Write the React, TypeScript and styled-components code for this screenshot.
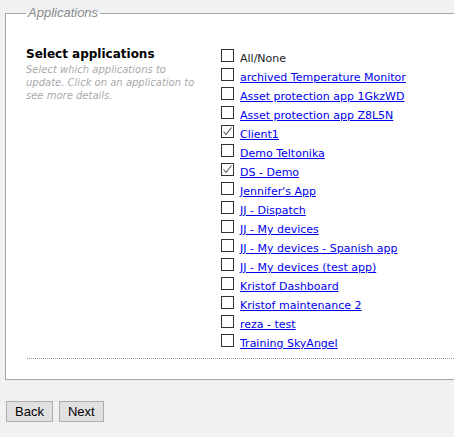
import styled, { createGlobalStyle } from 'styled-components';

const apps: { name: string; checked?: boolean }[] = [
  { name: 'archived Temperature Monitor' },
  { name: 'Asset protection app 1GkzWD' },
  { name: 'Asset protection app Z8L5N' },
  { name: 'Client1', checked: true },
  { name: 'Demo Teltonika' },
  { name: 'DS - Demo', checked: true },
  { name: "Jennifer's App" },
  { name: 'JJ - Dispatch' },
  { name: 'JJ - My devices' },
  { name: 'JJ - My devices - Spanish app' },
  { name: 'JJ - My devices (test app)' },
  { name: 'Kristof Dashboard' },
  { name: 'Kristof maintenance 2' },
  { name: 'reza - test' },
  { name: 'Training SkyAngel' },
];

const GlobalStyle = createGlobalStyle`
  html, body {
    margin: 0;
    padding: 0;
    background: #f0f1f3;
    overflow: hidden;
  }
  body {
    font-family: "DejaVu Sans", Verdana, sans-serif;
  }
`;

const Page = styled.div`
  padding-top: 5px;
`;

const Fieldset = styled.fieldset`
  margin: 0 0 0 5px;
  padding: 25px 0 20px 20px;
  border: 1px solid #a5a5a5;
  border-right: none;
  background: #fff;
  min-width: 0;
`;

const Legend = styled.legend`
  padding: 0 2px;
  font-family: "Liberation Sans", Arial, sans-serif;
  font-style: italic;
  font-size: 13px;
  line-height: 16px;
  color: #8a8a8a;
`;

const Columns = styled.div`
  display: flex;
  align-items: flex-start;
`;

const Intro = styled.div`
  width: 195px;
  padding-right: 20px;
  box-sizing: border-box;
`;

const Heading = styled.div`
  font-weight: bold;
  font-size: 12px;
  line-height: 16px;
  color: #000;
`;

const Hint = styled.div`
  margin-top: 1px;
  font-style: italic;
  font-size: 10px;
  line-height: 13px;
  color: #aaa;
`;

const List = styled.div`
  margin-top: 3px;
  display: flex;
  flex-direction: column;
`;

const Row = styled.label`
  display: flex;
  align-items: flex-start;
  gap: 6px;
  height: 19px;
  font-size: 11px;
  line-height: 19px;
  white-space: nowrap;
`;

const Box = styled.span`
  width: 13px;
  height: 13px;
  flex: none;
  box-sizing: border-box;
  border: 1px solid #333;
  background: #fff;
  display: flex;
  align-items: center;
  justify-content: center;
`;

const Plain = styled.span`
  color: #222;
`;

const AppLink = styled.a`
  color: #0000ee;
  text-decoration: underline;
  cursor: pointer;
`;

const Divider = styled.div`
  margin-top: 5px;
  margin-left: 1px;
  border-top: 1px dotted #999;
`;

const Buttons = styled.div`
  display: flex;
  gap: 6px;
  margin: 21px 0 0 6px;
`;

const Button = styled.button`
  height: 21px;
  padding: 0 8px;
  font-family: "Liberation Sans", Arial, sans-serif;
  font-size: 13px;
  color: #000;
  background: #e1e1e1;
  border: 1px solid #adadad;
  border-radius: 0;
`;

const Check = ({ checked }: { checked?: boolean }) => (
  <Box>
    {checked && (
      <svg width="11" height="11" viewBox="0 0 11 11">
        <path d="M1.5 5.5 L4 8.5 L9.5 1.5" fill="none" stroke="#555" strokeWidth="1.1" />
      </svg>
    )}
  </Box>
);

export default function App() {
  return (
    <Page>
      <GlobalStyle />
      <Fieldset>
        <Legend>Applications</Legend>
        <Columns>
          <Intro>
            <Heading>Select applications</Heading>
            <Hint>Select which applications to update. Click on an application to see more details.</Hint>
          </Intro>
          <List>
            <Row>
              <Check />
              <Plain>All/None</Plain>
            </Row>
            {apps.map((app) => (
              <Row key={app.name}>
                <Check checked={app.checked} />
                <AppLink>{app.name}</AppLink>
              </Row>
            ))}
          </List>
        </Columns>
        <Divider />
      </Fieldset>
      <Buttons>
        <Button>Back</Button>
        <Button>Next</Button>
      </Buttons>
    </Page>
  );
}
